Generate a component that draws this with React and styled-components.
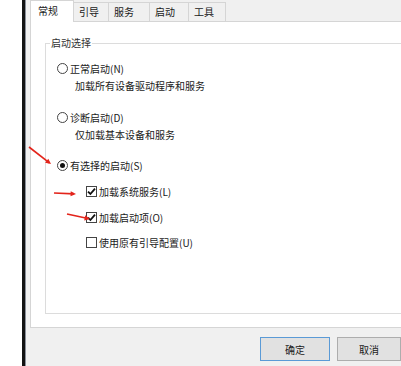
import styled, { createGlobalStyle } from "styled-components";

const GlobalStyle = createGlobalStyle`
  html, body {
    margin: 0;
    padding: 0;
    background: #ffffff;
    overflow: hidden;
  }
  body {
    font-family: "Noto Sans CJK SC", "Noto Sans", sans-serif;
  }
`;

const Page = styled.div`
  position: relative;
  width: 401px;
  height: 366px;
  display: flex;
  overflow: hidden;
  background: #ffffff;
  font-size: 10px;
  color: #1a1a1a;
`;
const Gutter = styled.div`
  width: 22px;
  flex: none;
  background: #ffffff;
`;
const FrameEdge = styled.div`
  width: 3px;
  flex: none;
  background: #121212;
  border-right: 1px solid #8a8f99;
`;
// the dialog runs past the right edge of the shot, so it is wider than what is left
const Window = styled.div`
  flex: none;
  width: 440px;
  box-sizing: border-box;
  display: flex;
  flex-direction: column;
  background: #f0f0f0;
  padding-left: 4px;
`;
const TabBar = styled.div`
  height: 21px;
  display: flex;
  align-items: flex-end;
  position: relative;
  z-index: 1;
`;
const Tab = styled.div`
  box-sizing: border-box;
  width: ${(p) => p.w}px;
  height: ${(p) => (p.active ? 22 : 19)}px;
  margin-bottom: ${(p) => (p.active ? -1 : 0)}px;
  margin-left: -1px;
  padding-left: ${(p) => (p.active ? 7 : 5)}px;
  border: 1px solid #d5d5d5;
  border-bottom: none;
  background: ${(p) => (p.active ? "#ffffff" : "#f0f0f0")};
  line-height: ${(p) => (p.active ? 20 : 18)}px;
  white-space: nowrap;

  &:first-child {
    margin-left: 0;
  }
`;
const Panel = styled.div`
  height: 307px;
  box-sizing: border-box;
  background: #ffffff;
  border: 1px solid #d5d5d5;
  border-right: none;
  padding: 14px 0 13px 14px;
  display: flex;
  flex-direction: column;
`;
const GroupBox = styled.fieldset`
  flex: 1;
  margin: 0;
  padding: 0;
  min-width: 0;
  border: 1px solid #dcdcdc;
  border-right: none;
`;
const GroupTitle = styled.legend`
  margin-left: 4px;
  padding: 0 1px;
  line-height: 14px;
  color: #333333;
`;
const GroupBody = styled.div`
  padding: 11px 0 0 11px;
  display: flex;
  flex-direction: column;
`;
const Row = styled.div`
  display: flex;
  align-items: center;
  height: 14px;
  margin-top: ${(p) => p.mt || 0}px;
  padding-left: ${(p) => p.indent || 0}px;
  white-space: nowrap;
`;
const Hint = styled.div`
  height: 14px;
  line-height: 14px;
  margin-top: ${(p) => p.mt || 0}px;
  padding-left: 18px;
  white-space: nowrap;
`;
const RadioDot = styled.span`
  box-sizing: border-box;
  width: 11px;
  height: 11px;
  border-radius: 50%;
  border: 1px solid #444444;
  background: #ffffff;
  margin-right: 2px;
  display: flex;
  align-items: center;
  justify-content: center;

  &::after {
    content: "";
    width: 5px;
    height: 5px;
    border-radius: 50%;
    background: ${(p) => (p.checked ? "#111111" : "transparent")};
  }
`;
const CheckBox = styled.span`
  box-sizing: border-box;
  width: 11px;
  height: 11px;
  border: 1px solid #444444;
  background: #ffffff;
  margin-right: 2px;
  display: flex;
  align-items: center;
  justify-content: center;
`;
const Footer = styled.div`
  flex: 1;
  display: flex;
  align-items: flex-start;
  padding: 9px 0 0 230px;
  gap: 7px;
`;
const Button = styled.div`
  box-sizing: border-box;
  flex: none;
  width: ${(p) => p.w}px;
  height: 24px;
  border: 1px solid ${(p) => (p.primary ? "#5a9ad6" : "#adadad")};
  background: #e1e1e1;
  display: flex;
  align-items: center;
  justify-content: center;
`;
const ArrowMark = styled.svg`
  position: absolute;
  display: block;
  pointer-events: none;
  overflow: visible;
`;

const Radio = ({ checked, label, mt }) => (
  <Row mt={mt}>
    <RadioDot checked={checked} />
    {label}
  </Row>
);

const Check = ({ checked, label, mt }) => (
  <Row mt={mt} indent={29}>
    <CheckBox>
      {checked && (
        <svg width="9" height="9" viewBox="0 0 9 9">
          <path d="M1 4.6 L3.4 7 L8 1.6" fill="none" stroke="#111" strokeWidth="1.8" />
        </svg>
      )}
    </CheckBox>
    {label}
  </Row>
);

// red annotation arrow, drawn over the dialog
const Arrow = ({ x1, y1, x2, y2 }) => {
  const a = Math.atan2(y2 - y1, x2 - x1);
  const len = 6;
  const spread = 0.45;
  const left = Math.min(x1, x2) - 6;
  const top = Math.min(y1, y2) - 6;
  const w = Math.abs(x2 - x1) + 12;
  const h = Math.abs(y2 - y1) + 12;
  const p1 = [x2 - len * Math.cos(a - spread), y2 - len * Math.sin(a - spread)];
  const p2 = [x2 - len * Math.cos(a + spread), y2 - len * Math.sin(a + spread)];
  return (
    <ArrowMark width={w} height={h} style={{ left, top }}>
      <g transform={`translate(${-left} ${-top})`}>
        <line x1={x1} y1={y1} x2={x2 - 2 * Math.cos(a)} y2={y2 - 2 * Math.sin(a)} stroke="#e3241b" strokeWidth="1.6" />
        <polygon points={`${x2},${y2} ${p1[0]},${p1[1]} ${p2[0]},${p2[1]}`} fill="#e3241b" />
      </g>
    </ArrowMark>
  );
};

const tabs = [
  { name: "常规", w: 44, active: true },
  { name: "引导", w: 36 },
  { name: "服务", w: 42 },
  { name: "启动", w: 40 },
  { name: "工具", w: 38 },
];

const App = () => {
  return (
    <>
      <GlobalStyle />
      <Page>
        <Gutter />
        <FrameEdge />
        <Window>
          <TabBar>
            {tabs.map((t) => (
              <Tab key={t.name} w={t.w} active={t.active}>
                {t.name}
              </Tab>
            ))}
          </TabBar>
          <Panel>
            <GroupBox>
              <GroupTitle>启动选择</GroupTitle>
              <GroupBody>
                <Radio label="正常启动(N)" />
                <Hint mt={4}>加载所有设备驱动程序和服务</Hint>
                <Radio label="诊断启动(D)" mt={17} />
                <Hint mt={4}>仅加载基本设备和服务</Hint>
                <Radio label="有选择的启动(S)" mt={16} checked />
                <Check label="加载系统服务(L)" mt={12} checked />
                <Check label="加载启动项(O)" mt={12} checked />
                <Check label="使用原有引导配置(U)" mt={11} />
              </GroupBody>
            </GroupBox>
          </Panel>
          <Footer>
            <Button w={70} primary>确定</Button>
            <Button w={64}>取消</Button>
          </Footer>
        </Window>
        <Arrow x1={29} y1={147} x2={51} y2={164} />
        <Arrow x1={54} y1={193} x2={76} y2={194} />
        <Arrow x1={67} y1={214} x2={90} y2={219} />
      </Page>
    </>
  );
};

export default App;
